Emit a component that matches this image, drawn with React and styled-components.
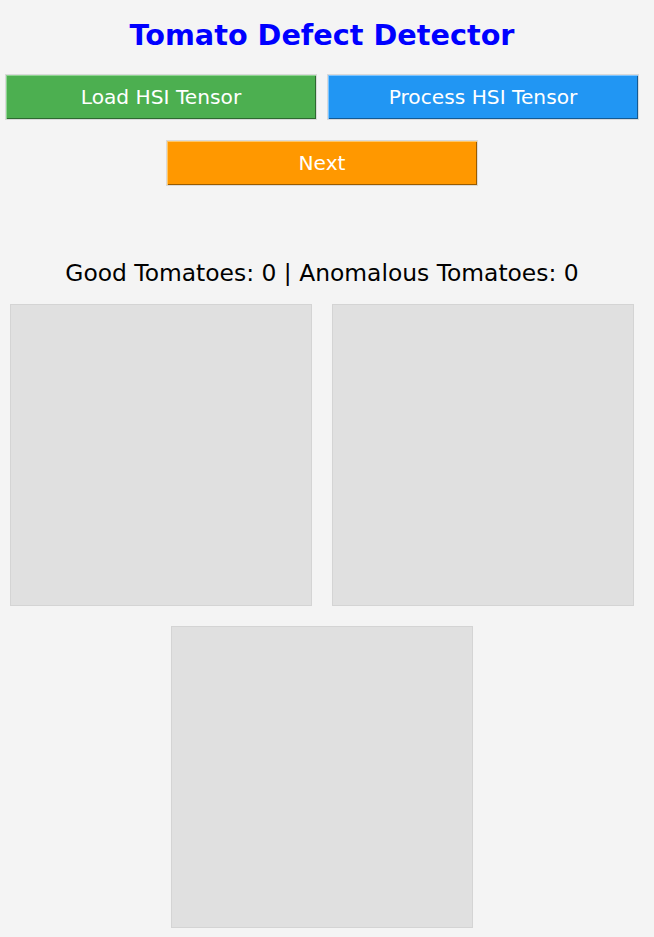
// Import React
import React, { useState } from "react";

// Import Styled Components
import styled, { createGlobalStyle } from "styled-components";

const palette = {
	green: { base: "#4caf50", light: "#8fd492", dark: "#2d6930" },
	blue: { base: "#2196f3", light: "#7cc4ff", dark: "#145a92" },
	orange: { base: "#ff9800", light: "#ffc766", dark: "#995b00" },
};

const App = () => {
	const [counts] = useState({ good: 0, anomalous: 0 });
	const images = ["rgb", "mask", "result"];

	return (
		<>
			<GlobalStyle />
			<StyledPage>
				<Title>Tomato Defect Detector</Title>
				<ButtonRow>
					<ActionButton tone="green">Load HSI Tensor</ActionButton>
					<ActionButton tone="blue">Process HSI Tensor</ActionButton>
				</ButtonRow>
				<NextRow>
					<ActionButton tone="orange">Next</ActionButton>
				</NextRow>
				<Counter>
					Good Tomatoes: {counts.good} | Anomalous Tomatoes: {counts.anomalous}
				</Counter>
				<Gallery>
					{images.map((name) => (
						<ImageSlot key={name} />
					))}
				</Gallery>
			</StyledPage>
		</>
	);
};

export default App;

const GlobalStyle = createGlobalStyle`
	html, body {
		margin: 0;
		background: #f4f4f4;
	}
	body {
		font-family: "DejaVu Sans", "Liberation Sans", sans-serif;
		overflow: hidden;
	}
`;

const StyledPage = styled.div`
	width: 644px;
	min-height: 937px;
	display: flex;
	flex-direction: column;
	align-items: center;
`;

const Title = styled.h1`
	margin: 19px 0 0;
	height: 33px;
	font-size: 28.7px;
	line-height: 33px;
	font-weight: bold;
	color: #0000ff;
`;

const ButtonRow = styled.div`
	display: flex;
	gap: 10px;
	margin-top: 22px;
`;

const NextRow = styled.div`
	margin-top: 20px;
`;

const ActionButton = styled.button`
	width: 312px;
	height: 46px;
	padding: 0;
	box-sizing: border-box;
	border: 1px solid #d9d9d9;
	background: ${({ tone }) => palette[tone].base};
	box-shadow: inset 1px 1px 0 ${({ tone }) => palette[tone].light},
		inset -1px -1px 0 ${({ tone }) => palette[tone].dark};
	color: #ffffff;
	font-family: "DejaVu Sans", sans-serif;
	font-size: 20.2px;
	cursor: pointer;
`;

const Counter = styled.div`
	margin-top: 74px;
	height: 27px;
	font-size: 23.4px;
	line-height: 27px;
	color: #000000;
`;

const Gallery = styled.div`
	width: 644px;
	margin-top: 7px;
	display: flex;
	flex-wrap: wrap;
	justify-content: center;
`;

const ImageSlot = styled.div`
	width: 300px;
	height: 300px;
	margin: 10px;
	background: #e0e0e0;
	border: 1px solid #d4d4d4;
`;
